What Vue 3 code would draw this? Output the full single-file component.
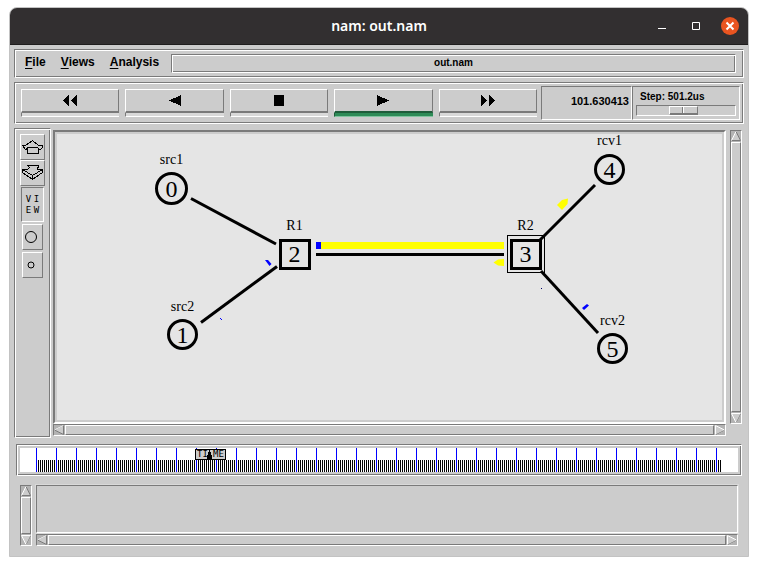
<script setup>
import { ref } from 'vue'

const step = ref(46)
const time = ref(25)

const menus = ['File', 'Views', 'Analysis']

const transport = [
  { name: 'Rewind', w: 14, d: 'M6 0V11L0 5.5ZM14 0V11L8 5.5Z' },
  { name: 'Play backward', w: 12, d: 'M12 0V11L0 5.5Z' },
  { name: 'Stop', w: 10, d: 'M0 0H10V11H0Z' },
  { name: 'Play', w: 12, d: 'M0 0V11L12 5.5Z', active: true },
  { name: 'Fast forward', w: 14, d: 'M0 0V11L6 5.5ZM8 0V11L14 5.5Z' },
]

const circles = [
  { id: 0, label: 'src1', x: 171.5, y: 188.5, r: 15, ly: 164 },
  { id: 1, label: 'src2', x: 182.5, y: 334.5, r: 14, ly: 311 },
  { id: 4, label: 'rcv1', x: 609.5, y: 169.5, r: 14, ly: 145 },
  { id: 5, label: 'rcv2', x: 612.5, y: 348.5, r: 14, ly: 325 },
]

const routers = [
  { id: 2, label: 'R1', x: 294.5 },
  { id: 3, label: 'R2', x: 525.5 },
]

const links = [
  [191, 198.5, 276, 244],
  [201, 322.5, 277, 266.5],
  [316, 254.5, 504, 254.5],
  [540, 240, 595, 185],
  [541, 271, 598, 333],
]

const major = Array.from({ length: 35 }, (_, i) => 16 + i * 20)
const minor = Array.from({ length: 343 }, (_, i) => 16 + i * 2).filter((x) => (x - 16) % 20)
</script>

<template>
  <div class="desktop">
    <main class="window">
      <header class="titlebar">
        <h1>nam: out.nam</h1>
        <div class="controls">
          <button aria-label="Minimize"><svg width="8" height="8"><path d="M0 6.5H8" /></svg></button>
          <button aria-label="Maximize"><svg width="8" height="8"><path d="M.5 .5H7.5V7.5H.5Z" /></svg></button>
          <button class="close" aria-label="Close">
            <svg width="18" height="18"><path d="M5.5 5.5L12.5 12.5M12.5 5.5L5.5 12.5" /></svg>
          </button>
        </div>
      </header>

      <div class="body">
        <div class="menubar groove">
          <nav>
            <button v-for="m in menus" :key="m"><u>{{ m[0] }}</u>{{ m.slice(1) }}</button>
          </nav>
          <div class="filename groove">out.nam</div>
        </div>

        <div class="toolbar groove">
          <div class="transport">
            <button v-for="b in transport" :key="b.name" :class="{ active: b.active }" :aria-label="b.name">
              <span class="face">
                <svg :width="b.w" height="11" shape-rendering="crispEdges"><path :d="b.d" /></svg>
              </span>
              <span class="strip"></span>
            </button>
          </div>
          <output class="clock sunken">101.630413</output>
          <div class="step sunken">
            <label for="step">Step: 501.2us</label>
            <input id="step" v-model="step" type="range" min="0" max="100" />
          </div>
        </div>

        <div class="workspace">
          <aside class="tools groove">
            <button class="wide raised" aria-label="Move up">
              <svg width="21" height="14" shape-rendering="crispEdges">
                <path d="M10.5 .5L3.5 5.5H.5L3.5 9.5H5.5V13.5H16.5V9.5H18.5L20.5 7.5V5.5H16.5Z M4.5 9.5L5.5 7.5H15.5L17.5 9.5" />
              </svg>
            </button>
            <button class="wide raised" aria-label="Move down">
              <svg width="21" height="16" shape-rendering="crispEdges">
                <path d="M5.5 .5H16.5L15.5 4.5H20.5V7.5L10.5 14.5L.5 7.5V4.5H5.5L7.5 2.5ZM.5 4.5L10.5 10.5L20.5 4.5M10.5 10.5V14.5" />
              </svg>
            </button>
            <button class="view sunken" aria-label="View">
              <span>V</span><span>I</span><span>E</span><span>W</span>
            </button>
            <button class="small raised" aria-label="Larger nodes">
              <svg width="12" height="12"><circle cx="6" cy="6" r="5.5" /></svg>
            </button>
            <button class="small raised" aria-label="Smaller nodes">
              <svg width="8" height="8"><circle cx="4" cy="4" r="3" /></svg>
            </button>
          </aside>

          <div class="stage">
            <div class="canvas">
              <svg viewBox="57 134 665 286" role="img" aria-label="Network topology">
                <line v-for="(l, i) in links" :key="i" class="link" :x1="l[0]" :y1="l[1]" :x2="l[2]" :y2="l[3]" />
                <g class="yellow">
                  <rect x="321" y="242" width="183" height="7" />
                  <path d="M557 205L562 200L568 198.500L567.500 204L562 210Z" />
                  <path d="M493.500 262.500L498 259.500L504 259V266L498 265.500Z" />
                </g>
                <g class="blue">
                  <rect x="316" y="242" width="5" height="7" />
                  <path d="M582 308L587 304L589 305.500L584 310Z" />
                  <path d="M265 260H268L271.500 264L269.500 266Z" />
                  <path d="M220 318H221V319H222V320H221V319H220Z" />
                  <rect class="speck" x="541" y="288" width="1" height="1" />
                </g>
                <g v-for="n in circles" :key="n.id">
                  <circle class="node" :cx="n.x" :cy="n.y" :r="n.r" />
                  <text class="num" :x="n.x" :y="n.y + 8">{{ n.id }}</text>
                  <text class="name" :x="n.x" :y="n.ly">{{ n.label }}</text>
                </g>
                <rect class="select" x="507.500" y="235.500" width="37" height="37" />
                <g v-for="n in routers" :key="n.id">
                  <rect class="node" :x="n.x - 14" y="240.500" width="29" height="28" />
                  <text class="num" :x="n.x" y="262">{{ n.id }}</text>
                  <text class="name" :x="n.x" y="230">{{ n.label }}</text>
                </g>
              </svg>
            </div>
            <div class="hbar">
              <button aria-label="Scroll left"><svg width="10" height="10"><path class="lit" d="M9.500 .5L.5 5" /><path class="dim" d="M.5 5L9.500 9.500V.5" /></svg></button>
              <div class="thumb"></div>
              <button aria-label="Scroll right"><svg width="10" height="10"><path class="dim" d="M9.500 5L.5 9.500" /><path class="lit" d="M.5 9.500V.5L9.500 5" /></svg></button>
            </div>
          </div>

          <div class="vbar">
            <button aria-label="Scroll up"><svg width="10" height="10"><path class="dim" d="M5 .5L9.500 9.500H.5" /><path class="lit" d="M.5 9.500L5 .5" /></svg></button>
            <div class="thumb"></div>
            <button aria-label="Scroll down"><svg width="10" height="10"><path class="dim" d="M9.500 .5L5 9.500" /><path class="lit" d="M9.500 .5H.5L5 9.500" /></svg></button>
          </div>
        </div>

        <div class="timeline groove">
          <svg viewBox="0 0 718 24" shape-rendering="crispEdges" aria-hidden="true">
            <rect v-for="x in minor" :key="x" :x="x" y="12" width="1" height="12" />
            <rect v-for="x in major" :key="x" class="major" :x="x" y="0" width="1" height="24" />
            <rect x="175" y="1" width="31" height="11" />
            <rect class="plate" x="176" y="2" width="29" height="9" />
            <path d="M189 2H190V4H191V7H192V11H187V7H188V4H189Z" />
            <text x="177" y="9">TI</text>
            <text x="193" y="9">ME</text>
          </svg>
          <input v-model="time" type="range" min="0" max="100" aria-label="Time" />
        </div>

        <div class="notes">
          <div class="vbar">
            <button aria-label="Scroll notes up"><svg width="10" height="10"><path class="dim" d="M5 .5L9.500 9.500H.5" /><path class="lit" d="M.5 9.500L5 .5" /></svg></button>
            <div class="thumb"></div>
            <button aria-label="Scroll notes down"><svg width="10" height="10"><path class="dim" d="M9.500 .5L5 9.500" /><path class="lit" d="M9.500 .5H.5L5 9.500" /></svg></button>
          </div>
          <div class="pane">
            <div class="list"></div>
            <div class="hbar">
              <button aria-label="Scroll notes left"><svg width="10" height="10"><path class="lit" d="M9.500 .5L.5 5" /><path class="dim" d="M.5 5L9.500 9.500V.5" /></svg></button>
              <div class="thumb"></div>
              <button aria-label="Scroll notes right"><svg width="10" height="10"><path class="dim" d="M9.500 5L.5 9.500" /><path class="lit" d="M.5 9.500V.5L9.500 5" /></svg></button>
            </div>
          </div>
        </div>
      </div>
    </main>
  </div>
</template>

<style>
body {
  background: #fff;
}
</style>

<style scoped>
* {
  box-sizing: border-box;
}

.desktop {
  padding: 7px 9px 9px;
  font-family: "Liberation Sans", Arial, sans-serif;
  color: #000;
}

button {
  display: flex;
  align-items: center;
  justify-content: center;
  margin: 0;
  padding: 0;
  border: 0;
  border-radius: 0;
  background: #ccc;
  color: #000;
  font: inherit;
}

svg {
  display: block;
}

.window {
  border: 1px solid #c3c3c3;
  border-radius: 8px 8px 0 0;
  background: #ccc;
}

.groove {
  border: 1px solid;
  border-color: #7a7a7a #fff #fff #7a7a7a;
  box-shadow: inset 1px 1px #fff, inset -1px -1px #7a7a7a;
}

.sunken {
  border: 1px solid;
  border-color: #7a7a7a #fff #fff #7a7a7a;
}

.raised {
  border: 1px solid;
  border-color: #fff #7a7a7a #7a7a7a #fff;
}

/* Title bar */
.titlebar {
  display: grid;
  grid-template-columns: 1fr auto 1fr;
  align-items: center;
  height: 37px;
  border-bottom: 1px solid #1f1d1d;
  border-radius: 7px 7px 0 0;
  background: #322f30;
  color: #fff;
}

.titlebar h1 {
  grid-column: 2;
  margin: 0;
  font: 600 14px/20px "Noto Sans", sans-serif;
}

.controls {
  display: flex;
  justify-content: flex-end;
  align-items: center;
  gap: 8px;
  padding-right: 9px;
}

.controls button {
  width: 26px;
  height: 18px;
  background: none;
}

.controls .close {
  width: 18px;
  margin-left: 4px;
  border-radius: 50%;
  background: #e95420;
}

.controls path {
  fill: none;
  stroke: #fff;
}

.close path {
  stroke-width: 2;
}

.body {
  display: flex;
  flex-direction: column;
  gap: 4px;
  padding: 4px 4px 10px;
}

/* Menu bar */
.menubar {
  display: flex;
  padding: 4px 7px 4px 10px;
}

.menubar nav {
  display: flex;
  gap: 15px;
  min-width: 146px;
  font-size: 12px;
  font-weight: 700;
}

.menubar nav button {
  height: 16px;
}

.menubar u {
  text-decoration-thickness: 1px;
  text-underline-offset: 2px;
}

.filename {
  flex: 1;
  height: 19px;
  font-size: 10px;
  font-weight: 700;
  line-height: 15px;
  text-align: center;
}

/* Toolbar */
.toolbar {
  display: flex;
  align-items: flex-start;
  padding: 3px 3px 3px 6px;
}

.transport {
  display: flex;
  flex: 1;
  gap: 6px;
  padding: 3px 4px 0 0;
}

.transport button {
  flex: 1;
  flex-direction: column;
  align-items: stretch;
}

.face {
  display: flex;
  align-items: center;
  justify-content: center;
  height: 24px;
  border: 1px solid;
  border-width: 1px 1px 2px 1px;
  border-color: #fff #7a7a7a #7a7a7a #fff;
}

.strip {
  height: 4px;
  border: 1px solid;
  border-width: 0 0 1px 1px;
  border-color: #7a7a7a #fff #fff #7a7a7a;
  background: #d9d9d9;
}

.active .face {
  border-bottom-color: #1f5c3a;
}

.active .strip {
  border-color: #1f5c3a #82c4a0 #82c4a0 #1f5c3a;
  background: #2e8b57;
}

.clock {
  width: 91px;
  height: 34px;
  padding-right: 2px;
  font-size: 11px;
  font-weight: 700;
  line-height: 29px;
  text-align: right;
}

.step {
  width: 108px;
  height: 34px;
  padding: 3px;
}

.step label {
  display: block;
  padding-left: 4px;
  font-size: 10px;
  font-weight: 700;
  line-height: 14px;
}

.step input {
  display: block;
  width: 100%;
  height: 11px;
  margin: 1px 0 0;
  border: 1px solid;
  border-color: #7a7a7a #fff #fff #7a7a7a;
  background: #ccc;
  appearance: none;
}

.step input::-webkit-slider-thumb {
  width: 29px;
  height: 9px;
  border: 1px solid;
  border-color: #fff #7a7a7a #7a7a7a #fff;
  background: linear-gradient(90deg, #ccc 12px, #7a7a7a 12px 13px, #fff 13px 14px, #ccc 14px);
  box-shadow: inset 0 -1px #7a7a7a;
  appearance: none;
}

/* Workspace */
.workspace {
  display: flex;
  gap: 2px;
  padding-right: 2px;
}

.tools {
  display: flex;
  flex-direction: column;
  align-items: center;
  width: 37px;
  padding-top: 5px;
}

.tools svg {
  fill: none;
  stroke: #000;
}

.tools .wide {
  width: 25px;
  height: 26px;
}

.tools .view {
  display: grid;
  grid-template-columns: 8px 8px;
  grid-auto-rows: 11px;
  align-content: center;
  width: 23px;
  height: 35px;
  margin: 1px 0 2px;
  font: 9px/11px "DejaVu Sans Mono", monospace;
}

.tools .small {
  width: 21px;
  height: 26px;
  margin-bottom: 2px;
  padding-right: 3px;
}

.stage {
  flex: 1;
  min-width: 0;
  padding: 2px 0;
}

.canvas {
  border: 2px solid;
  border-color: #7a7a7a #fff #fff #7a7a7a;
  padding: 2px;
  background: #ccc;
}

.canvas svg {
  width: 100%;
  background: #e5e5e5;
}

.link {
  stroke: #000;
  stroke-width: 3;
}

.node {
  fill: none;
  stroke: #000;
  stroke-width: 3;
}

.select {
  fill: none;
  stroke: #000;
}

.yellow {
  fill: #ff0;
}

.blue {
  fill: #00f;
}

.speck {
  fill: #006;
}

.canvas text {
  font-family: "Liberation Serif", "Times New Roman", serif;
  text-anchor: middle;
}

.num {
  font-size: 24px;
}

.name {
  font-size: 14px;
}

/* Scroll bars */
.hbar,
.vbar {
  display: flex;
  border: 1px solid;
  border-color: #7a7a7a #fff #fff #7a7a7a;
  background: #b3b3b3;
}

.hbar {
  height: 12px;
}

.vbar {
  flex-direction: column;
  width: 12px;
}

.workspace .vbar {
  margin: 2px 0 14px 2px;
}

.hbar button,
.vbar button {
  width: 10px;
  height: 10px;
  background: #b3b3b3;
}

.hbar path,
.vbar path {
  fill: #ccc;
}

.lit {
  stroke: #fff;
}

.dim {
  stroke: #7a7a7a;
}

.thumb {
  flex: 1;
  margin: 0 1px;
  border: 1px solid;
  border-color: #fff #7a7a7a #7a7a7a #fff;
  background: #ccc;
}

.vbar .thumb {
  margin: 1px 0;
}

/* Timeline */
.timeline {
  display: grid;
  margin: 2px 2px 0;
  padding: 3px;
}

.timeline svg,
.timeline input {
  grid-area: 1 / 1;
}

.timeline svg {
  width: 100%;
  background: #fff;
}

.timeline input {
  width: 100%;
  margin: 0;
  opacity: 0;
}

.major {
  fill: #00f;
}

.plate {
  fill: #ccc;
}

.timeline text {
  font: 9px "DejaVu Sans Mono", monospace;
}

/* Notes */
.notes {
  display: flex;
  gap: 4px;
  margin-top: 5px;
  padding: 0 6px;
}

.pane {
  flex: 1;
}

.list {
  height: 48px;
  margin-bottom: 1px;
  border: 1px solid;
  border-color: #7a7a7a #fff #fff #7a7a7a;
  outline: 1px solid #d9d9d9;
}
</style>
